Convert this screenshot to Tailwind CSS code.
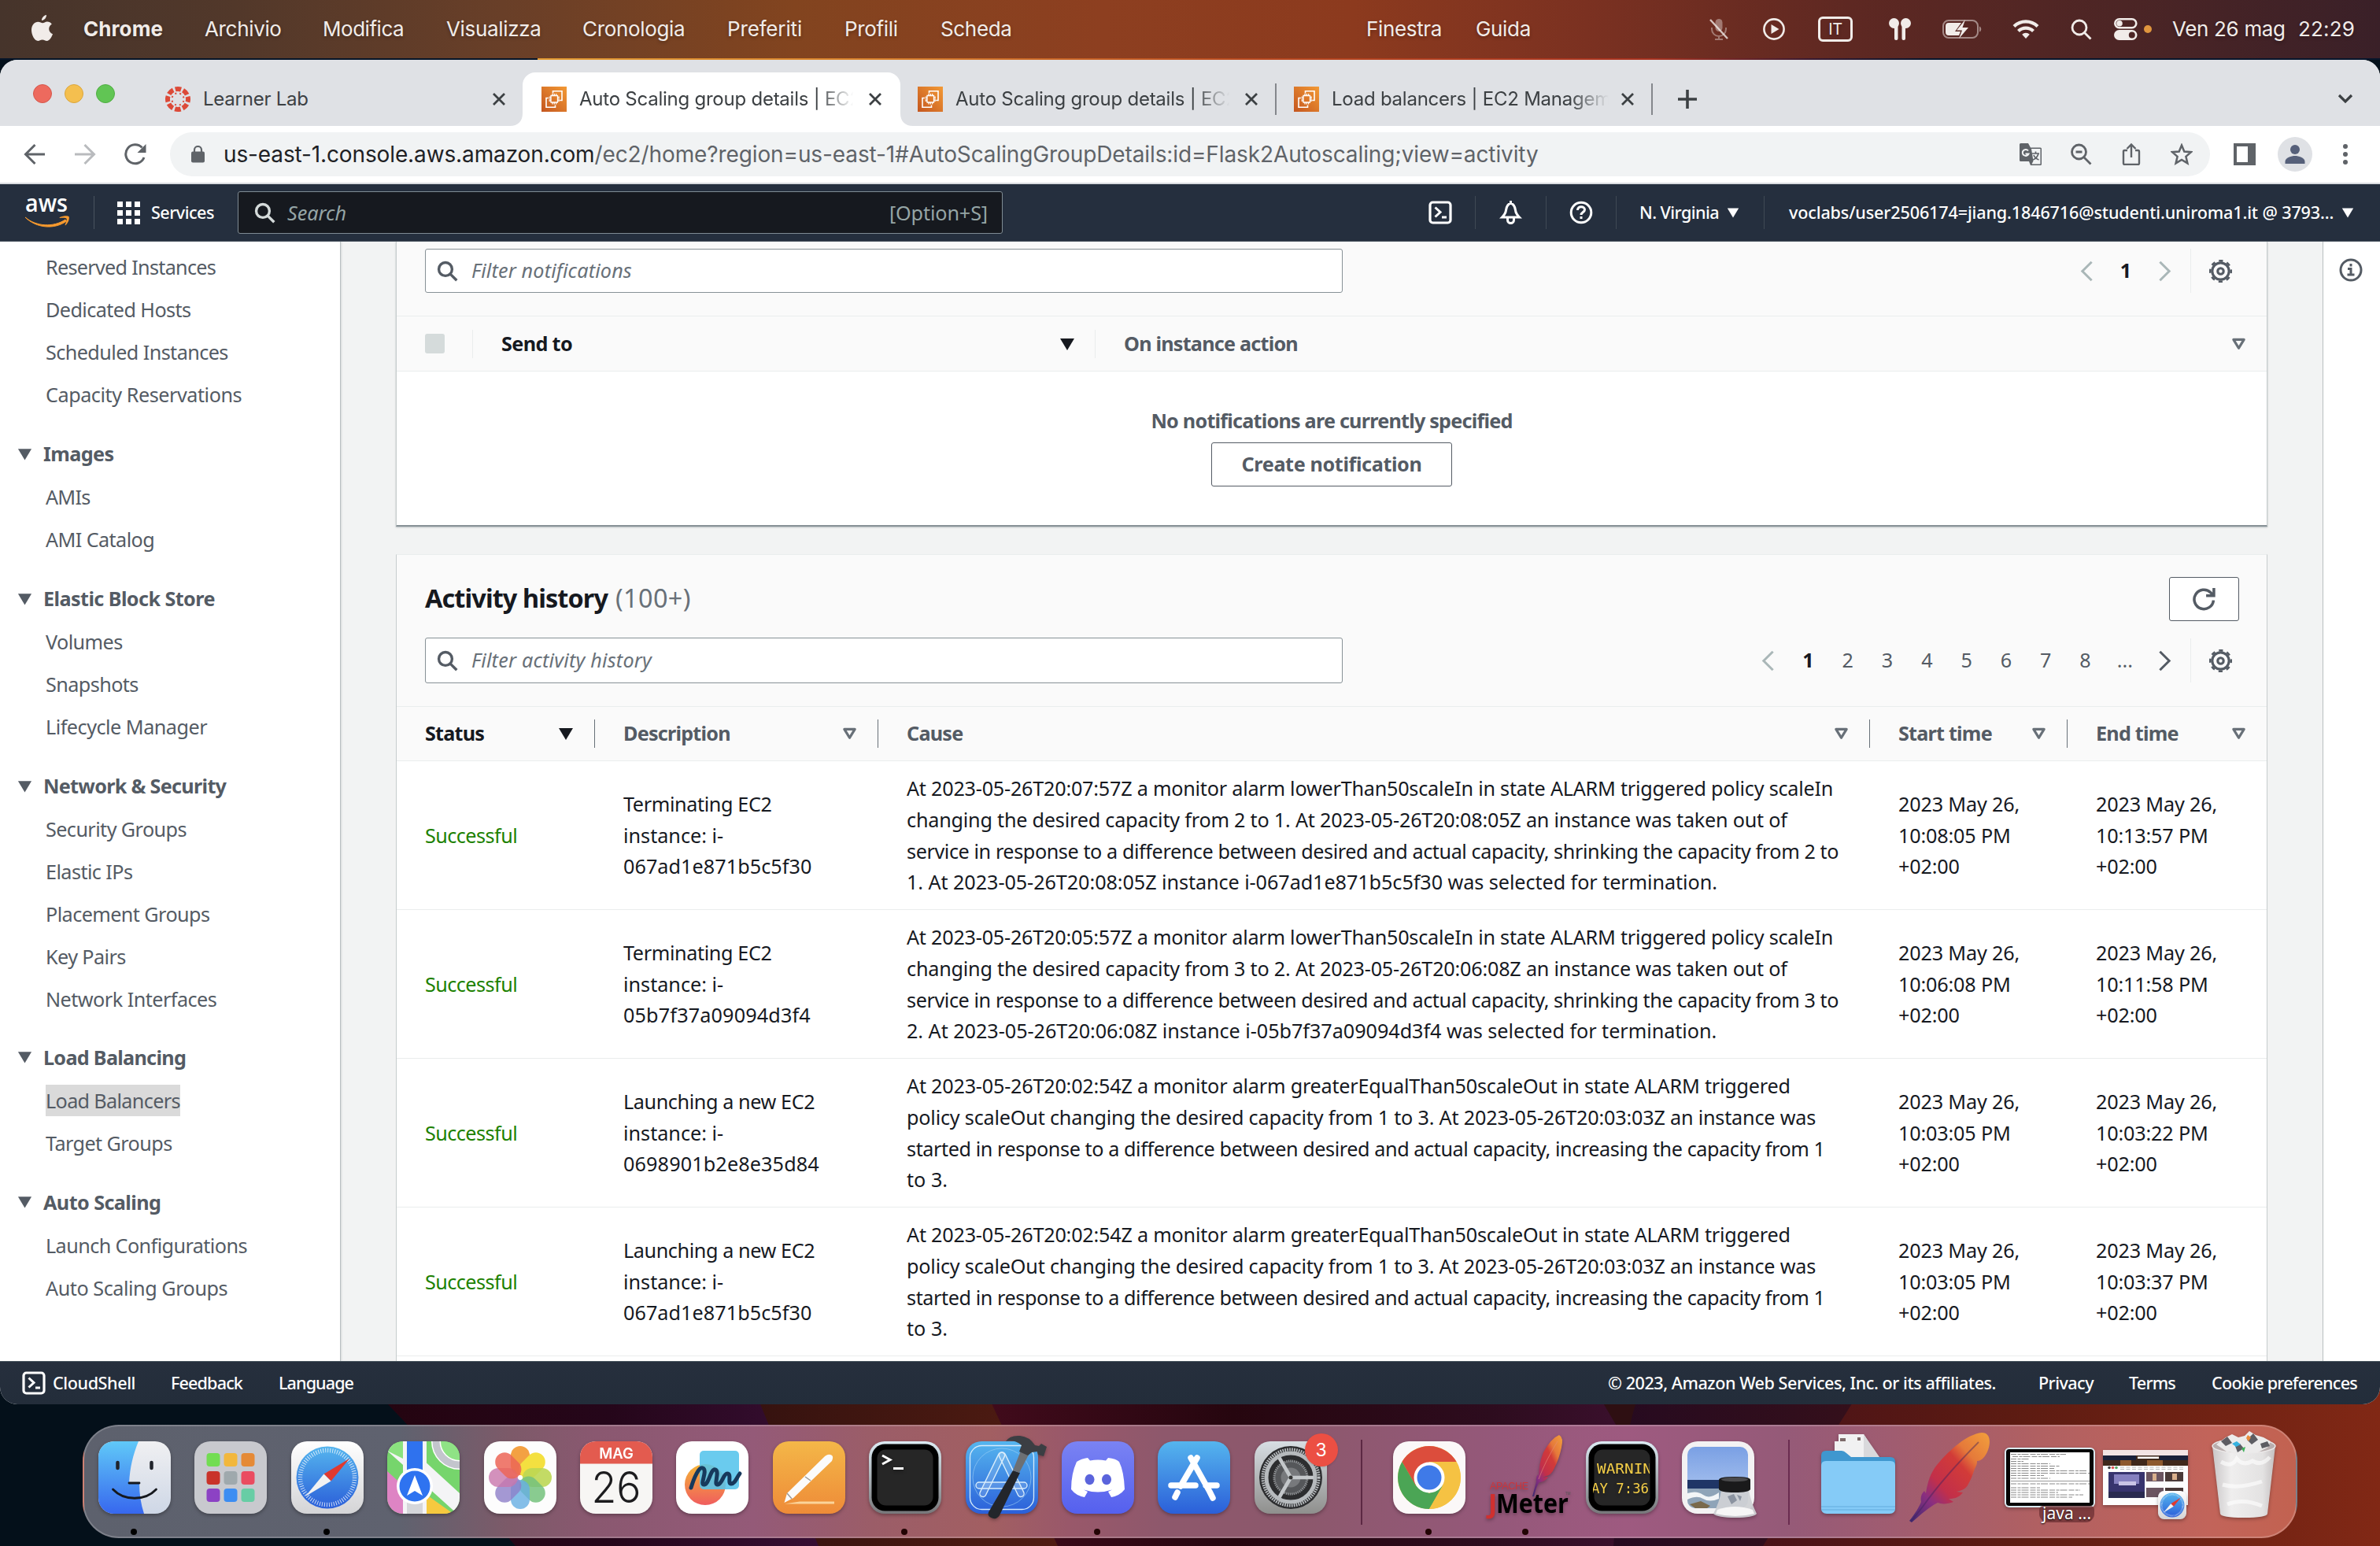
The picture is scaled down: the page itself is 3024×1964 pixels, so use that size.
<!DOCTYPE html>
<html lang="it">
<head>
<meta charset="utf-8">
<title>Auto Scaling group details | EC2 Management Console</title>
<script src="https://cdn.jsdelivr.net/npm/@tailwindcss/browser@4"></script>
</head>
<body class="relative w-[3024px] h-[1964px] overflow-hidden bg-[#04101a] font-['Noto_Sans',sans-serif]">

<svg class="absolute w-0 h-0" aria-hidden="true">
  <defs>
    <linearGradient id="ec2g" x1="0" y1="1" x2="1" y2="0"><stop offset="0" stop-color="#c4561f"/><stop offset="1" stop-color="#f39a35"/></linearGradient>
    <linearGradient id="blueV" x1="0" y1="0" x2="0" y2="1"><stop offset="0" stop-color="#55b5ee"/><stop offset="1" stop-color="#2b5fd9"/></linearGradient>
    <linearGradient id="feather" x1="1" y1="0" x2="0" y2="1"><stop offset="0" stop-color="#f2a03c"/><stop offset=".25" stop-color="#e5793a"/><stop offset=".36" stop-color="#d23b38"/><stop offset=".6" stop-color="#c22f4a"/><stop offset=".75" stop-color="#8a2f80"/><stop offset="1" stop-color="#3a2a70"/></linearGradient>
    <symbol id="ec2" viewBox="0 0 32 32"><path fill="url(#ec2g)" d="M0 0h32v32H0z"/><g fill="none" stroke="#fff" stroke-width="1.6"><path d="M14.5 8.500V5.800H26v11.700h-2.800M17.500 23.500V26.200H6V14.500h2.800"/><path d="M12 11.500h8.500v8.500H12zM14 9v2.500M16.300 9v2.500M18.600 9v2.500M14 20v2.500M16.300 20v2.500M18.600 20v2.500M9.500 13.500H12M9.500 15.800H12M9.500 18H12M20.500 13.500H23M20.500 15.800H23M20.500 18H23" stroke-width="1.300"/></g></symbol>
    <symbol id="x" viewBox="0 0 18 18"><path d="M2 2l14 14M16 2L2 16" stroke="currentColor" stroke-width="2.800" fill="none"/></symbol>
    <symbol id="mag" viewBox="0 0 16 16"><circle cx="6.500" cy="6.500" r="5" fill="none" stroke="currentColor" stroke-width="2"/><path d="M10.300 10.300l4.700 4.700" stroke="currentColor" stroke-width="2"/></symbol>
    <symbol id="down" viewBox="0 0 20 16"><path d="M1 1h18L10 16z" fill="currentColor"/></symbol>
    <symbol id="downo" viewBox="0 0 20 16"><path d="M3 2h14L10 13.500z" fill="none" stroke="currentColor" stroke-width="3.400" stroke-linejoin="round"/></symbol>
    <symbol id="prev" viewBox="0 0 18 28"><path d="M15.500 1.500L3 14l12.500 12.500" fill="none" stroke="currentColor" stroke-width="3.200"/></symbol>
    <symbol id="next" viewBox="0 0 18 28"><path d="M2.500 1.500L15 14 2.500 26.500" fill="none" stroke="currentColor" stroke-width="3.200"/></symbol>
    <symbol id="gear" viewBox="0 0 28 28"><g fill="none" stroke="currentColor"><circle cx="14" cy="14" r="10.300" stroke-width="3"/><circle cx="14" cy="14" r="3.600" stroke-width="3"/><circle cx="14" cy="14" r="12.800" stroke-width="2.600" stroke-dasharray="5 5.050" stroke-dashoffset="2.500"/></g></symbol>
    <symbol id="shell" viewBox="0 0 30 30"><rect x="2" y="2" width="26" height="26" rx="3.500" fill="none" stroke="currentColor" stroke-width="3.200"/><path d="M8.500 8.500l6.500 6-6.500 6M17 21h6" fill="none" stroke="currentColor" stroke-width="3"/></symbol>
    <linearGradient id="sfw" x1="0" y1="0" x2="0" y2="1"><stop offset="0" stop-color="#fff"/><stop offset="1" stop-color="#d4d4d6"/></linearGradient>
    <symbol id="safari" viewBox="0 0 92 92"><rect width="92" height="92" rx="20" fill="url(#sfw)"/><circle cx="46" cy="46" r="39.500" fill="url(#blueV)"/><circle cx="46" cy="46" r="34.500" fill="none" stroke="#fff" stroke-opacity=".75" stroke-width="5.500" stroke-dasharray="1 2.010"/><path d="M74 22L50.500 50.500 41.500 41.500z" fill="#e0392f"/><path d="M18 70l23.500-28.500 9 9z" fill="#f2f2f2"/></symbol>
    <symbol id="plume" viewBox="0 0 102 114"><path d="M92 0c10 0 12 10 8 22-3 8-8 14-14 14 0 2 0 5-3 10-3 9-5 14-9 21-3 5-9 7-14 8l8 1c-5 7-12 8-18 8l6 4c-8 3-15 3-20 1-12 6-20 14-33 25l-3-2c8-10 12-17 15-24-1-6 0-10 4-14l2 3c2-14 6-26 14-36C51 22 73 2 92 0z" fill="url(#feather)"/><path d="M88 12C60 40 34 70 17 94L2 113" fill="none" stroke="#40205a" stroke-opacity=".45" stroke-width="1.800"/></symbol>
    <linearGradient id="rim" x1="0" y1="0" x2="0" y2="1"><stop offset="0" stop-color="#dcebf3"/><stop offset="1" stop-color="#77777a"/></linearGradient>
    <symbol id="term" viewBox="0 0 92 92"><rect width="92" height="92" rx="20" fill="url(#rim)"/><rect x="3.500" y="3.500" width="85" height="85" rx="17" fill="#000"/><rect x="10.500" y="10.500" width="71" height="71" rx="11" fill="#262626"/></symbol>
  </defs>
</svg>

<!-- desktop wallpaper below the window -->
<svg class="absolute left-0 top-[1740px] w-[3024px] h-[224px] -z-10" viewBox="0 0 3024 224" preserveAspectRatio="none">
  <defs>
    <linearGradient id="w1"><stop offset="0" stop-color="#24040f"/><stop offset=".5" stop-color="#25061a"/><stop offset="1" stop-color="#3a1038"/></linearGradient>
    <linearGradient id="w2"><stop offset="0" stop-color="#35120f"/><stop offset="1" stop-color="#511c12"/></linearGradient>
    <linearGradient id="w3"><stop offset="0" stop-color="#420b1c"/><stop offset=".35" stop-color="#26060f"/><stop offset=".7" stop-color="#2d0c1e"/><stop offset="1" stop-color="#431236"/></linearGradient>
    <linearGradient id="w4"><stop offset="0" stop-color="#260a20"/><stop offset="1" stop-color="#36101a"/></linearGradient>
    <linearGradient id="w5"><stop offset="0" stop-color="#4a1218"/><stop offset=".4" stop-color="#5c1b12"/><stop offset="1" stop-color="#812815"/></linearGradient>
  </defs>
  <path d="M0 0h3024v224H0z" fill="#04101a"/>
  <path d="M450 0Q540 90 655 224H1100L940 0z" fill="url(#w1)"/>
  <path d="M948 0L1040 224h320L1240 0z" fill="url(#w2)"/>
  <path d="M1240 0l104 224h830L2020 0z" fill="url(#w3)"/>
  <path d="M2012 0l132 224h40L2096 0z" fill="#2e0f12"/>
  <path d="M2096 0Q2062 60 2050 224h250L2390 0z" fill="url(#w4)"/>
  <path d="M2380 0L2240 224h784V0z" fill="url(#w5)"/>
</svg>

<!-- menu bar -->
<header class="h-[74px] flex items-center bg-[linear-gradient(90deg,#46342b_0px,#52382a_300px,#693f28_640px,#82441f_1008px,#8d3f20_1400px,#8c3a1e_1720px,#7b3121_2016px,#5e2822_2350px,#4c2525_2700px,#3a2028_3024px)] text-[#f1ece9] font-['Inter',sans-serif] text-[26px] whitespace-nowrap tracking-[-0.013em] [text-shadow:0_2px_4px_rgba(0,0,0,.3)]">
  <svg class="ml-10 w-[27px] h-[33px] -mt-1 shrink-0" viewBox="0 0 27 33" fill="currentColor"><path d="M19 0c.3 3-2.600 7-6 7C12.600 4 16 .3 19 0zM20 8.500c2.300 0 4.500 1.200 5.800 3.200-5.400 3.100-4.400 10.300 1.200 12.600C25.500 28 23 33 19.500 33c-2.300 0-3-1.400-5.700-1.400-2.700 0-3.500 1.400-5.600 1.400C4 33 0 25.500 0 19.300 0 12.500 4.200 8.700 8.300 8.700c2.500 0 4.300 1.600 5.900 1.600 1.500 0 3.400-1.800 5.800-1.800z"/></svg>
  <b class="ml-[39px] -mt-px w-[154px] font-bold tracking-[0.003em]">Chrome</b>
  <span class="-mt-px w-[150px]">Archivio</span>
  <span class="-mt-px w-[157px] tracking-[-0.018em]">Modifica</span>
  <span class="-mt-px w-[173px]">Visualizza</span>
  <span class="-mt-px w-[184px]">Cronologia</span>
  <span class="-mt-px w-[149px] tracking-[-0.006em]">Preferiti</span>
  <span class="-mt-px w-[122px]">Profili</span>
  <span class="-mt-px w-[541px]">Scheda</span>
  <span class="-mt-px w-[139px]">Finestra</span>
  <span class="-mt-px w-[295px]">Guida</span>
  <svg class="w-[28px] h-[28px] shrink-0" viewBox="0 0 28 28"><g opacity=".4" fill="currentColor"><rect x="9.500" y="1" width="9" height="16" rx="4.500"/><path d="M5 12v2a9 9 0 0018 0v-2M14 23v4M9 27h10" fill="none" stroke="currentColor" stroke-width="2"/></g><path d="M3 2l22 24" stroke="currentColor" stroke-opacity=".8" stroke-width="2.400"/></svg>
  <svg class="ml-[42px] w-[28px] h-[28px] shrink-0" viewBox="0 0 28 28"><circle cx="14" cy="14" r="12.600" fill="none" stroke="currentColor" stroke-width="2.600"/><path d="M10.500 8l10 6-10 6z" fill="currentColor"/></svg>
  <span class="ml-[42px] w-[44px] h-[32px] border-[3px] border-current rounded-[6px] text-[20px] leading-[26px] text-center shrink-0">IT</span>
  <svg class="ml-[45px] w-[30px] h-[28px] shrink-0" viewBox="0 0 30 28" fill="currentColor"><circle cx="7.500" cy="6.500" r="6.500"/><circle cx="22.500" cy="6.500" r="6.500"/><rect x="8" y="8" width="4.500" height="20" rx="2"/><rect x="17.500" y="8" width="4.500" height="20" rx="2"/></svg>
  <svg class="ml-[39px] w-[50px] h-[26px] shrink-0" viewBox="0 0 50 26"><rect x="1" y="2" width="44" height="22" rx="7" fill="none" stroke="currentColor" stroke-opacity=".5" stroke-width="2"/><path d="M47 9.500c3 1 3 6 0 7z" fill="currentColor" opacity=".5"/><path d="M8 5h16l-8 11h7l-2 5H8a4 4 0 01-4-4V9a4 4 0 014-4z" fill="currentColor"/><path d="M29 1L18 14.500h7L21 25l12-14h-7.500z" fill="currentColor"/></svg>
  <svg class="ml-[39px] w-[34px] h-[26px] shrink-0" viewBox="0 0 34 26" fill="none" stroke="currentColor" stroke-width="4.200"><path d="M2 9.500a21.500 21.500 0 0130 0M7.500 15.500a13.500 13.500 0 0119 0"/><path d="M17 25l-4.800-5.200a6.800 6.800 0 019.600 0z" fill="currentColor" stroke="none"/></svg>
  <svg class="ml-[40px] w-[27px] h-[27px] shrink-0" viewBox="0 0 27 27" fill="none" stroke="currentColor" stroke-width="2.800"><circle cx="11" cy="11" r="9"/><path d="M17.500 17.500l8 8"/></svg>
  <svg class="ml-[28px] w-[30px] h-[28px] shrink-0" viewBox="0 0 30 28"><rect x="1.300" y="1.300" width="27" height="11" rx="5.500" fill="none" stroke="currentColor" stroke-width="2.600"/><circle cx="7" cy="6.800" r="3.800" fill="currentColor"/><rect x="0" y="15" width="29.500" height="13" rx="6.500" fill="currentColor"/><circle cx="22.800" cy="21.500" r="4" fill="#4c2525"/></svg>
  <i class="ml-[8px] w-[10px] h-[10px] rounded-full bg-[#e0963e] shrink-0"></i>
  <span class="ml-[26px] -mt-[2px] w-[160px]">Ven 26 mag</span><span class="-mt-[2px] tracking-[0.006em]">22:29</span>
</header>
<div class="h-[2px] bg-[linear-gradient(90deg,#061528_683px,#e39a31_683px,#d9822c_1100px,#b8481f_1600px,#a8321f_2100px,#3a1a30_2300px,#08162c_2450px)]"></div>

<!-- browser window -->
<main class="h-[1708px] bg-white rounded-[22px] overflow-hidden flex flex-col">
  <!-- tab strip -->
  <div class="h-[84px] bg-[#dfe1e5] flex items-end font-['Inter',sans-serif] text-[24px] text-[#3c4043] whitespace-nowrap tracking-[-0.01em] shrink-0">
    <div class="flex h-[68px] items-center pl-[42px] w-[664px]">
      <div class="flex gap-4 -mt-[14px]"><i class="size-6 rounded-full bg-[#ed6a5e] border border-[#d5574c]"></i><i class="size-6 rounded-full bg-[#f4bf4f] border border-[#dba63c]"></i><i class="size-6 rounded-full bg-[#61c554] border border-[#4fae42]"></i></div>
      <svg class="ml-[64px] size-8 shrink-0" viewBox="0 0 32 32"><circle cx="16" cy="16" r="13" fill="none" stroke="#dc4a38" stroke-width="6" stroke-dasharray="7.500 2.710" stroke-dashoffset="3.750"/><circle cx="16" cy="16" r="7.600" fill="none" stroke="#dc4a38" stroke-width="2" stroke-dasharray="2 3.970" stroke-dashoffset="-2"/></svg>
      <span class="ml-4 w-[367px]">Learner Lab</span>
      <svg class="size-[18px] shrink-0"><use href="#x"/></svg>
    </div>
    <div class="relative flex h-[68px] w-[480px] items-center rounded-t-[16px] bg-white pl-6">
      <svg class="absolute -left-4 bottom-0 size-4" viewBox="0 0 16 16"><path d="M16 0v16H0C10 16 16 10 16 0z" fill="#fff"/></svg>
      <svg class="absolute -right-4 bottom-0 size-4" viewBox="0 0 16 16"><path d="M0 0v16h16C6 16 0 10 0 0z" fill="#fff"/></svg>
      <svg class="size-8 shrink-0"><use href="#ec2"/></svg>
      <span class="ml-4 w-[352px] mr-[15px] overflow-hidden [mask-image:linear-gradient(90deg,#000_86%,transparent_99%)] shrink-0">Auto Scaling group details | EC2</span>
      <svg class="size-[18px] shrink-0"><use href="#x"/></svg>
    </div>
    <div class="flex h-[68px] w-[478px] items-center pl-[22px]">
      <svg class="size-8 shrink-0"><use href="#ec2"/></svg>
      <span class="ml-4 w-[352px] mr-[15px] overflow-hidden [mask-image:linear-gradient(90deg,#000_86%,transparent_99%)] shrink-0">Auto Scaling group details | EC2</span>
      <svg class="size-[18px] shrink-0"><use href="#x"/></svg>
      <i class="ml-[21px] w-[2px] h-10 bg-[#84878c] shrink-0"></i>
    </div>
    <div class="flex h-[68px] w-[478px] items-center pl-[22px]">
      <svg class="size-8 shrink-0"><use href="#ec2"/></svg>
      <span class="ml-4 w-[352px] mr-[15px] overflow-hidden [mask-image:linear-gradient(90deg,#000_86%,transparent)] shrink-0">Load balancers | EC2 Management</span>
      <svg class="size-[18px] shrink-0"><use href="#x"/></svg>
      <i class="ml-[21px] w-[2px] h-10 bg-[#84878c] shrink-0"></i>
    </div>
    <svg class="ml-[32px] mb-[22px] size-6" viewBox="0 0 24 24"><path d="M12 0v24M0 12h24" stroke="#3c4043" stroke-width="3.600"/></svg>
    <svg class="ml-auto mr-[34px] mb-[28px] w-[20px] h-[13px]" viewBox="0 0 20 13"><path d="M2 2l8 8 8-8" fill="none" stroke="#3c4043" stroke-width="3.200"/></svg>
  </div>
  <!-- toolbar -->
  <div class="h-[74px] bg-white border-b-2 border-[#dadce0] flex items-center pl-[30px] shrink-0 text-[#5f6368]">
    <svg class="w-7 h-7" viewBox="0 0 28 28" fill="none" stroke="currentColor" stroke-width="3"><path d="M27 14H3M14.500 2L2.500 14l12 12"/></svg>
    <svg class="ml-9 w-7 h-7 text-[#b9bbbe]" viewBox="0 0 28 28" fill="none" stroke="currentColor" stroke-width="3"><path d="M1 14h24M13.500 2l12 12-12 12"/></svg>
    <svg class="ml-9 w-7 h-7" viewBox="0 0 28 28" fill="none" stroke="currentColor" stroke-width="3"><path d="M25 18a12 12 0 11-2.500-12.500"/><path d="M27.500 1v11h-11z" fill="currentColor" stroke="none"/></svg>
    <div class="ml-[30px] w-[2592px] h-14 rounded-full bg-[#f1f3f4] flex items-center pl-[27px] font-['Inter',sans-serif] text-[28px] whitespace-nowrap tracking-[-0.0045em]">
      <svg class="w-[17px] h-[22px]" viewBox="0 0 17 22"><rect y="7.500" width="17" height="14" rx="2" fill="currentColor"/><path d="M4 8V5.500a4.500 4.500 0 019 0V8" fill="none" stroke="currentColor" stroke-width="2.200"/></svg>
      <span class="ml-[24px] text-[#202124]">us-east-1.console.aws.amazon.com</span><span class="tracking-[-0.004em]">/ec2/home?region=us-east-1#AutoScalingGroupDetails:id=Flask2Autoscaling;view=activity</span>
      <div class="ml-auto mr-[22px] flex gap-9">
        <svg class="size-7" viewBox="0 0 28 28"><path d="M1.500 0h9.500l3 5.500h12.500q1.500 0 1.500 1.500v19.500q0 1.500-1.500 1.500H14l-2-5H1.500Q0 23 0 21.500v-20Q0 0 1.500 0z" fill="currentColor"/><path d="M15 7h11.500v19.500H15.500l2-4z" fill="#f1f3f4"/><path d="M11 9.500a4 4 0 10.500 4H7.500" fill="none" stroke="#f1f3f4" stroke-width="2"/><path d="M16 13h9M20.500 10.500V13M24 13c-1 4-4 7-7 8M18 15c1 3 4 5 6.500 6" stroke="currentColor" stroke-width="1.700" fill="none"/></svg>
        <svg class="size-7" viewBox="0 0 28 28" fill="none" stroke="currentColor" stroke-width="2.800"><circle cx="11.500" cy="11" r="9"/><path d="M18 18l8.500 8.500M7.500 11h8"/></svg>
        <svg class="size-7" viewBox="0 0 28 28" fill="none" stroke="currentColor" stroke-width="2.400"><path d="M9 9H5.500Q4 9 4 10.500v15Q4 27 5.500 27h17q1.500 0 1.500-1.500v-15Q24 9 22.500 9H19M14 18V2M8.500 7L14 1.500 19.500 7"/></svg>
        <svg class="size-7" viewBox="0 0 28 28" fill="none" stroke="currentColor" stroke-width="2.500"><path d="M14 2.500l3.300 8 8.700.7-6.600 5.700 2 8.500L14 20.900l-7.400 4.500 2-8.500L2 11.200l8.700-.7z"/></svg>
      </div>
    </div>
    <svg class="ml-[30px] size-7" viewBox="0 0 28 28"><path d="M0 0h28v28H0zM4 4v20h14V4z" fill="currentColor" fill-rule="evenodd"/></svg>
    <svg class="ml-[28px] size-11" viewBox="0 0 44 44"><circle cx="22" cy="22" r="22" fill="#dfe1e5"/><circle cx="22" cy="16" r="6" fill="#56607a"/><path d="M9.500 34v-3c0-4.500 8-7 12.500-7s12.500 2.500 12.500 7v3z" fill="#56607a"/></svg>
    <svg class="ml-[39px] w-[6px] h-[26px]" viewBox="0 0 6 26" fill="currentColor"><circle cx="3" cy="3" r="3"/><circle cx="3" cy="13" r="3"/><circle cx="3" cy="23" r="3"/></svg>
  </div>
  <!-- AWS navigation -->
  <nav class="h-[73px] bg-[#252f3e] border-b border-[#4a545f] flex items-center text-white text-[21.600px] font-medium whitespace-nowrap shrink-0">
    <svg class="ml-8 w-[57px] h-[37px] shrink-0 overflow-visible" viewBox="0 0 57 37"><text x="0" y="17" font-family="Open Sans" font-weight="600" font-size="31" textLength="54" lengthAdjust="spacingAndGlyphs" fill="#fff">aws</text><path d="M0 24c14 12 36 13 51 3l1.500 2C37 40 14 38 0 24z" fill="#f79a2e" stroke="#f79a2e"/><path d="M44 24c4-2 10-2.500 11.500-1 1.200 2-.5 8-4 11-1 .5-1 0-.7-.8 1.500-3.500 2.500-6.500 1.700-7.500-1-1-4.500-1-8-.6-1 0-1.300-.6-.5-1.100z" fill="#f79a2e"/></svg>
    <i class="ml-[30px] w-px h-[42px] bg-[#4a545f]"></i>
    <svg class="ml-[29px] w-[29px] h-[29px]" viewBox="0 0 29 29" fill="#fff"><path d="M0 0h7v7H0zM11 0h7v7h-7zM22 0h7v7h-7zM0 11h7v7H0zM11 11h7v7h-7zM22 11h7v7h-7zM0 22h7v7H0zM11 22h7v7h-7zM22 22h7v7h-7z"/></svg>
    <span class="ml-[14px] w-[110px] tracking-[-0.024em]">Services</span>
    <div class="w-[972px] h-[54px] rounded-[3px] border border-[#7f8b93] bg-[#16191f] flex items-center text-[25.200px] font-normal text-[#95a5a6]">
      <svg class="ml-[20px] size-[27px] text-[#d5dbdb]"><use href="#mag"/></svg>
      <i class="ml-[15px] mt-px">Search</i>
      <span class="ml-auto mr-[18px] mt-px tracking-[-0.005em]">[Option+S]</span>
    </div>
    <svg class="ml-[541px] size-[30px]"><use href="#shell"/></svg>
    <i class="ml-[29px] w-px h-[42px] bg-[#3f4954]"></i>
    <svg class="ml-[30px] w-[29px] h-[30px]" viewBox="0 0 29 30" fill="none" stroke="#fff" stroke-width="3"><path d="M14.500 3c-4 1.500-5.500 5-6 9-.4 4-2 6-5 9h22c-3-3-4.600-5-5-9-.5-4-2-7.500-6-9zM14.500 0v4M10.500 22v2.500a4 4 0 008 0V22"/></svg>
    <i class="ml-[30px] w-px h-[42px] bg-[#3f4954]"></i>
    <svg class="ml-[29px] size-[30px]" viewBox="0 0 30 30" fill="none" stroke="#fff" stroke-width="3"><circle cx="15" cy="15" r="12.800"/><path d="M10.500 12c0-6 9-5.500 9-.5 0 3-4.500 3-4.500 6.500M15 20v3"/></svg>
    <i class="ml-[29px] w-px h-[42px] bg-[#3f4954]"></i>
    <span class="ml-[29px] w-[111px] mt-px tracking-[-0.026em]">N. Virginia</span>
    <svg class="w-[16px] h-[14px]"><use href="#down"/></svg>
    <i class="ml-[31px] w-px h-[42px] bg-[#3f4954]"></i>
    <span class="ml-[31px] w-[702px] mt-px tracking-[-0.007em]">voclabs/user2506174=jiang.1846716@studenti.uniroma1.it @ 3793...</span>
    <svg class="w-[16px] h-[14px]"><use href="#down"/></svg>
  </nav>

  <!-- console body -->
  <div class="h-[1422px] flex bg-[#f2f3f3] overflow-hidden text-[25.200px] text-[#16191f] shrink-0 whitespace-nowrap">
    <aside class="w-[433px] bg-white border-r border-[#b9bfc1] shadow-[1px_0_2px_rgba(0,28,36,.12)] text-[#545b64] shrink-0 pt-[6px] tracking-[-0.023em]">
      <ul class="pl-[58px] [&>li]:h-[54px] [&>li]:flex [&>li]:items-center">
        <li class="tracking-[-0.028em]">Reserved Instances</li><li>Dedicated Hosts</li><li>Scheduled Instances</li><li class="tracking-[-0.018em]">Capacity Reservations</li>
      </ul>
      <h3 class="mt-5 h-14 flex items-center pl-[22px] font-bold"><svg class="w-[19px] h-[16px] mr-[14px]"><use href="#down"/></svg>Images</h3>
      <ul class="pl-[58px] [&>li]:h-[54px] [&>li]:flex [&>li]:items-center"><li class="tracking-[-0.03em]">AMIs</li><li>AMI Catalog</li></ul>
      <h3 class="mt-5 h-14 flex items-center pl-[22px] font-bold"><svg class="w-[19px] h-[16px] mr-[14px]"><use href="#down"/></svg>Elastic Block Store</h3>
      <ul class="pl-[58px] [&>li]:h-[54px] [&>li]:flex [&>li]:items-center"><li>Volumes</li><li>Snapshots</li><li class="tracking-[-0.02em]">Lifecycle Manager</li></ul>
      <h3 class="mt-5 h-14 flex items-center pl-[22px] font-bold tracking-[-0.028em]"><svg class="w-[19px] h-[16px] mr-[14px]"><use href="#down"/></svg>Network &amp; Security</h3>
      <ul class="pl-[58px] [&>li]:h-[53.900px] [&>li]:flex [&>li]:items-center"><li>Security Groups</li><li>Elastic IPs</li><li>Placement Groups</li><li>Key Pairs</li><li class="tracking-[-0.021em]">Network Interfaces</li></ul>
      <h3 class="mt-[19px] h-14 flex items-center pl-[22px] font-bold tracking-[-0.028em]"><svg class="w-[19px] h-[16px] mr-[14px]"><use href="#down"/></svg>Load Balancing</h3>
      <ul class="pl-[58px] [&>li]:h-[54px] [&>li]:flex [&>li]:items-center"><li><span class="bg-[#dadada] h-10 leading-10 tracking-[-0.026em]">Load Balancers</span></li><li>Target Groups</li></ul>
      <h3 class="mt-5 h-14 flex items-center pl-[22px] font-bold"><svg class="w-[19px] h-[16px] mr-[14px]"><use href="#down"/></svg>Auto Scaling</h3>
      <ul class="pl-[58px] [&>li]:h-[54px] [&>li]:flex [&>li]:items-center"><li>Launch Configurations</li><li class="tracking-[-0.018em]">Auto Scaling Groups</li></ul>
    </aside>

    <div class="ml-[70px] w-[2378px] flex flex-col gap-[35px] shrink-0">
      <!-- notifications card -->
      <section class="h-[362px] bg-white border-x border-b-2 border-x-[#c6cccd] border-b-[#879196] shadow-[0_1px_2px_rgba(0,28,36,.25)] shrink-0">
        <div class="h-[95px] bg-[#fafafa] border-b border-[#eaeded] pt-[9px] pl-[36px] pr-[35px] flex items-start">
          <div class="w-[1166px] h-[56px] bg-white border border-[#879196] rounded-[3px] flex items-center italic text-[#687078]"><svg class="ml-[14px] size-[27px] text-[#545b64]"><use href="#mag"/></svg><span class="ml-[17px] tracking-[0.006em]">Filter notifications</span></div>
          <div class="ml-auto flex items-center h-[56px] text-[#545b64]">
            <svg class="w-[17px] h-[27px] text-[#aab7b8]"><use href="#prev"/></svg>
            <b class="w-[82px] text-center text-[#16191f]">1</b>
            <svg class="w-[17px] h-[27px] text-[#aab7b8]"><use href="#next"/></svg>
            <i class="ml-[24px] w-px h-[56px] bg-[#eaeded]"></i>
            <svg class="ml-[23px] mr-[9px] size-[29px]"><use href="#gear"/></svg>
          </div>
        </div>
        <div class="h-[70px] bg-[#fafafa] border-b border-[#eaeded] flex items-center font-bold">
          <i class="ml-[36px] size-[25px] rounded-[3px] bg-[#d5dbdb]"></i>
          <i class="ml-[35px] w-px h-9 bg-[#eaeded]"></i>
          <span class="ml-[36px] w-[709px] tracking-[-0.025em]">Send to</span>
          <svg class="w-[20px] h-[16px]"><use href="#down"/></svg>
          <i class="ml-[25px] w-px h-9 bg-[#eaeded]"></i>
          <span class="ml-[36px] text-[#545b64] tracking-[-0.031em]">On instance action</span>
          <svg class="ml-auto mr-[26px] w-[19px] h-[16px] text-[#687078]"><use href="#downo"/></svg>
        </div>
        <div class="flex flex-col items-center pt-[42px] font-bold text-[#545b64]">
          <span class="leading-[40px] tracking-[-0.031em]">No notifications are currently specified</span>
          <div class="mt-[8px] w-[306px] h-[56px] border border-[#545b64] rounded-[3px] flex items-center justify-center tracking-[-0.015em]">Create notification</div>
        </div>
      </section>

      <!-- activity history card -->
      <section class="h-[1100px] bg-white border-x border-t border-x-[#c6cccd] border-t-[#eaeded] shrink-0">
        <div class="h-[193px] bg-[#fafafa] border-b border-[#eaeded] pl-[36px] pr-[35px] pt-[28px]">
          <div class="flex h-[56px] items-center text-[32.400px]">
            <b class="mr-[10px] -mt-1 tracking-[-0.0276em]">Activity history</b><span class="-mt-1 text-[#687078] tracking-[0.012em]">(100+)</span>
            <div class="ml-auto w-[89px] h-[56px] border border-[#545b64] rounded-[3px] bg-white flex items-center justify-center text-[#545b64]"><svg class="size-[29px]" viewBox="0 0 28 28" fill="none" stroke="currentColor" stroke-width="3.400"><path d="M25.500 15A11.800 11.800 0 1122 5.500l3 3"/><path d="M26 0v9.500H16.500"/></svg></div>
          </div>
          <div class="mt-[21px] flex items-center">
            <div class="w-[1166px] h-[58px] bg-white border border-[#879196] rounded-[3px] flex items-center italic text-[#687078]"><svg class="ml-[14px] size-[27px] text-[#545b64]"><use href="#mag"/></svg><span class="ml-[17px] tracking-[0.008em]">Filter activity history</span></div>
            <div class="ml-auto flex items-center h-[56px] text-[#545b64] [&>span]:w-[50.300px] [&>span]:text-center">
              <svg class="w-[17px] h-[27px] text-[#aab7b8] mr-[17px]"><use href="#prev"/></svg>
              <span class="font-bold text-[#16191f]">1</span><span>2</span><span>3</span><span>4</span><span>5</span><span>6</span><span>7</span><span>8</span><span>...</span>
              <svg class="ml-[17px] w-[17px] h-[27px]"><use href="#next"/></svg>
              <i class="ml-[24px] w-px h-[56px] bg-[#eaeded]"></i>
              <svg class="ml-[23px] mr-[9px] size-[29px]"><use href="#gear"/></svg>
            </div>
          </div>
        </div>
        <div class="grid grid-cols-[252px_360px_1260px_251px_253px] h-[69px] bg-[#fafafa] border-b border-[#eaeded] items-center font-bold text-[#545b64] tracking-[-0.031em] [&>div]:flex [&>div]:items-center [&>div]:justify-between [&>div]:h-9 [&>div]:pl-[36px] [&>div]:pr-[26px]">
          <div class="border-r border-[#687078] text-[#16191f]">Status<svg class="w-[20px] h-[16px]"><use href="#down"/></svg></div>
          <div class="border-r border-[#687078]">Description<svg class="w-[19px] h-[16px] text-[#687078]"><use href="#downo"/></svg></div>
          <div class="border-r border-[#687078]">Cause<svg class="w-[19px] h-[16px] text-[#687078]"><use href="#downo"/></svg></div>
          <div class="border-r border-[#687078]">Start time<svg class="w-[19px] h-[16px] text-[#687078]"><use href="#downo"/></svg></div>
          <div>End time<svg class="w-[19px] h-[16px] text-[#687078]"><use href="#downo"/></svg></div>
        </div>
        <div class="[&>div]:grid [&>div]:grid-cols-[252px_360px_1260px_251px_253px] [&>div]:h-[189px] [&>div]:pt-px [&>div]:items-center [&>div]:border-b [&>div]:border-[#eaeded] [&>div>p]:pl-[36px] leading-[39.600px]">
          <div>
            <p class="text-[#1d8102] tracking-[-0.022em]">Successful</p>
            <p><span class="tracking-[-0.015em]">Terminating EC2</span><br>instance: i-<br><span class="tracking-[0.002em]">067ad1e871b5c5f30</span></p>
            <p><span class="tracking-[-0.009em]">At 2023-05-26T20:07:57Z a monitor alarm lowerThan50scaleIn in state ALARM triggered policy scaleIn</span><br><span class="tracking-[-0.0085em]">changing the desired capacity from 2 to 1. At 2023-05-26T20:08:05Z an instance was taken out of</span><br><span class="tracking-[-0.0164em]">service in response to a difference between desired and actual capacity, shrinking the capacity from 2 to</span><br><span class="tracking-[-0.0027em]">1. At 2023-05-26T20:08:05Z instance i-067ad1e871b5c5f30 was selected for termination.</span></p>
            <p class="tracking-[-0.007em]">2023 May 26,<br>10:08:05 PM<br>+02:00</p>
            <p class="tracking-[-0.007em]">2023 May 26,<br>10:13:57 PM<br>+02:00</p>
          </div>
          <div>
            <p class="text-[#1d8102] tracking-[-0.022em]">Successful</p>
            <p><span class="tracking-[-0.015em]">Terminating EC2</span><br>instance: i-<br><span class="tracking-[0.006em]">05b7f37a09094d3f4</span></p>
            <p><span class="tracking-[-0.009em]">At 2023-05-26T20:05:57Z a monitor alarm lowerThan50scaleIn in state ALARM triggered policy scaleIn</span><br><span class="tracking-[-0.0085em]">changing the desired capacity from 3 to 2. At 2023-05-26T20:06:08Z an instance was taken out of</span><br><span class="tracking-[-0.0164em]">service in response to a difference between desired and actual capacity, shrinking the capacity from 3 to</span><br><span class="tracking-[-0.0015em]">2. At 2023-05-26T20:06:08Z instance i-05b7f37a09094d3f4 was selected for termination.</span></p>
            <p class="tracking-[-0.007em]">2023 May 26,<br>10:06:08 PM<br>+02:00</p>
            <p class="tracking-[-0.007em]">2023 May 26,<br>10:11:58 PM<br>+02:00</p>
          </div>
          <div>
            <p class="text-[#1d8102] tracking-[-0.022em]">Successful</p>
            <p><span class="tracking-[-0.016em]">Launching a new EC2</span><br>instance: i-<br><span class="tracking-[0.005em]">0698901b2e8e35d84</span></p>
            <p><span class="tracking-[-0.0085em]">At 2023-05-26T20:02:54Z a monitor alarm greaterEqualThan50scaleOut in state ALARM triggered</span><br><span class="tracking-[-0.0078em]">policy scaleOut changing the desired capacity from 1 to 3. At 2023-05-26T20:03:03Z an instance was</span><br><span class="tracking-[-0.0166em]">started in response to a difference between desired and actual capacity, increasing the capacity from 1</span><br>to 3.</p>
            <p class="tracking-[-0.007em]">2023 May 26,<br>10:03:05 PM<br>+02:00</p>
            <p class="tracking-[-0.007em]">2023 May 26,<br>10:03:22 PM<br>+02:00</p>
          </div>
          <div>
            <p class="text-[#1d8102] tracking-[-0.022em]">Successful</p>
            <p><span class="tracking-[-0.016em]">Launching a new EC2</span><br>instance: i-<br><span class="tracking-[0.002em]">067ad1e871b5c5f30</span></p>
            <p><span class="tracking-[-0.0085em]">At 2023-05-26T20:02:54Z a monitor alarm greaterEqualThan50scaleOut in state ALARM triggered</span><br><span class="tracking-[-0.0078em]">policy scaleOut changing the desired capacity from 1 to 3. At 2023-05-26T20:03:03Z an instance was</span><br><span class="tracking-[-0.0166em]">started in response to a difference between desired and actual capacity, increasing the capacity from 1</span><br>to 3.</p>
            <p class="tracking-[-0.007em]">2023 May 26,<br>10:03:05 PM<br>+02:00</p>
            <p class="tracking-[-0.007em]">2023 May 26,<br>10:03:37 PM<br>+02:00</p>
          </div>
        </div>
      </section>
    </div>
    <aside class="ml-auto w-[73px] bg-white border-l border-[#b9bfc1] pl-[20px] pt-[21px] shrink-0">
      <svg class="size-[30px]" viewBox="0 0 30 30" fill="none" stroke="#545b64" stroke-width="3"><circle cx="15" cy="15" r="13"/><path d="M15 7v3.500M11 13.500h4v7M10.500 21h9"/></svg>
    </aside>
  </div>
  <!-- console footer -->
  <footer class="h-[55px] bg-[linear-gradient(#262f3d,#232d3a)] border-t border-[#47545e] flex items-center text-white text-[21.600px] font-medium whitespace-nowrap">
    <svg class="ml-[28px] size-[30px]"><use href="#shell"/></svg>
    <span class="ml-[9px] w-[150px] tracking-[-0.019em]">CloudShell</span>
    <span class="w-[137px] tracking-[-0.04em]">Feedback</span>
    <span class="tracking-[-0.043em]">Language</span>
    <span class="ml-auto w-[547px] tracking-[-0.0214em]">© 2023, Amazon Web Services, Inc. or its affiliates.</span>
    <span class="w-[115px] tracking-[-0.0256em]">Privacy</span>
    <span class="w-[105px] tracking-[-0.038em]">Terms</span>
    <span class="w-[214px] tracking-[-0.0353em]">Cookie preferences</span>
  </footer>
</main>

<!-- dock -->
<div class="mt-[26px] ml-[105px] w-[2814px] h-[144px] rounded-[46px] border-2 border-white/20 bg-[linear-gradient(90deg,#5d616d_0px,#5f626f_400px,#7d5a69_540px,#8a5870_650px,#945a78_850px,#9b5d68_1000px,#a25f62_1150px,#99586a_1250px,#8e586c_1370px,#8c586c_1540px,#95587a_1800px,#9e5a80_1960px,#955a78_2160px,#a05c70_2300px,#b06062_2480px,#c2645a_2700px,#c26250_2814px)] pt-[19px] pl-[18px] flex items-start [&>div]:relative [&>div]:size-[92px] [&>div]:shrink-0 [&>div]:mr-[30.400px] [&>div>svg]:size-full [&>div>svg]:overflow-visible [&>div>svg]:drop-shadow-[0_2px_2px_rgba(0,0,0,.3)]">
  <div><svg viewBox="0 0 92 92"><defs><linearGradient id="fb" x1="0" y1="0" x2="0" y2="1"><stop offset="0" stop-color="#60c9f8"/><stop offset="1" stop-color="#3767ee"/></linearGradient><linearGradient id="fw" x1="0" y1="0" x2="0" y2="1"><stop offset="0" stop-color="#f0f0f2"/><stop offset="1" stop-color="#ced7e6"/></linearGradient></defs><rect width="92" height="92" rx="20" fill="url(#fw)"/><path d="M20 0h31C44 17 40 33 39 53h13c0 14 2 27 6 39H20A20 20 0 010 72V20A20 20 0 0120 0z" fill="url(#fb)"/><path d="M24.500 27v7M67.500 27v7" stroke="#20242c" stroke-width="4.500" stroke-linecap="round"/><path d="M18.500 61c14 15 41 15 55 0M39 53h13" fill="none" stroke="#15181d" stroke-width="2.800" stroke-linecap="round"/></svg><i class="absolute left-[41px] top-[111px] size-2 rounded-full bg-black"></i></div>
  <div><svg viewBox="0 0 92 92"><rect width="92" height="92" rx="20" fill="#c8c9ce"/><rect x="15.500" y="15" width="17" height="17" rx="4" fill="#72dd52"/><rect x="37.500" y="15" width="17" height="17" rx="4" fill="#f2b73c"/><rect x="59.500" y="15" width="17" height="17" rx="4" fill="#e58a36"/><rect x="15.500" y="38" width="17" height="17" rx="4" fill="#c9332a"/><rect x="37.500" y="38" width="17" height="17" rx="4" fill="#9fa9ad"/><rect x="59.500" y="38" width="17" height="17" rx="4" fill="#ea4c60"/><rect x="15.500" y="60" width="17" height="17" rx="4" fill="#8c42c4"/><rect x="37.500" y="60" width="17" height="17" rx="4" fill="#3c8df2"/><rect x="59.500" y="60" width="17" height="17" rx="4" fill="#67cda5"/></svg></div>
  <div><svg><use href="#safari"/></svg><i class="absolute left-[41px] top-[111px] size-2 rounded-full bg-black"></i></div>
  <div><svg viewBox="0 0 92 92"><clipPath id="mc"><rect width="92" height="92" rx="20"/></clipPath><g clip-path="url(#mc)"><path fill="#76d56c" d="M0 0h92v92H0z"/><path d="M0 12L92 95V66L44 22 0 0z" fill="#f4f4f6"/><path d="M0 0h20v22L0 12z" fill="#8be27f"/><path d="M0 38l22 20v34H0z" fill="#de84c4"/><path d="M50 68l34 24H50z" fill="#f6c93f"/><circle cx="92" cy="0" r="30" fill="#8fe285" stroke="#fff" stroke-width="12"/><circle cx="92" cy="0" r="30" fill="none" stroke="#c3c5cd" stroke-width="9"/><path d="M20 0h30v92H20z" fill="#f4f4f6"/><path d="M25 0h20v50H25z" fill="#2f72ee"/><path d="M25 78h20v14H25z" fill="#d5d6da"/></g><circle cx="35" cy="57" r="23" fill="#fff"/><circle cx="35" cy="57" r="19.500" fill="#2e73f0"/><path d="M35 43l10 26-10-6-10 6z" fill="#fff"/></svg></div>
  <div><svg viewBox="0 0 92 92"><rect width="92" height="92" rx="20" fill="#fdfdfd"/><g opacity=".86"><rect x="34" y="6" width="24" height="37" rx="12" fill="#f29325"/><rect x="34" y="6" width="24" height="37" rx="12" fill="#f3dc22" transform="rotate(45 46 46)"/><rect x="34" y="6" width="24" height="37" rx="12" fill="#b3d238" fill-opacity=".9" transform="rotate(90 46 46)"/><rect x="34" y="6" width="24" height="37" rx="12" fill="#5fb969" fill-opacity=".85" transform="rotate(135 46 46)"/><rect x="34" y="6" width="24" height="37" rx="12" fill="#4da3df" fill-opacity=".8" transform="rotate(180 46 46)"/><rect x="34" y="6" width="24" height="37" rx="12" fill="#7c6cc0" fill-opacity=".8" transform="rotate(225 46 46)"/><rect x="34" y="6" width="24" height="37" rx="12" fill="#c0609f" fill-opacity=".8" transform="rotate(270 46 46)"/><rect x="34" y="6" width="24" height="37" rx="12" fill="#ea4d3c" fill-opacity=".85" transform="rotate(315 46 46)"/></g></svg></div>
  <div><svg viewBox="0 0 92 92"><rect width="92" height="92" rx="20" fill="#f7f6f4"/><path d="M20 0h52a20 20 0 0120 20v8.500H0V20A20 20 0 0120 0z" fill="#e35b4f"/><text x="46" y="22" text-anchor="middle" font-family="Inter" font-weight="600" font-size="18.500" fill="#fff">MAG</text><text x="46" y="78" text-anchor="middle" font-family="Inter" font-weight="300" font-size="55" textLength="63" lengthAdjust="spacingAndGlyphs" fill="#1c1c1e">26</text></svg></div>
  <div><svg viewBox="0 0 92 92"><defs><linearGradient id="ff" x1="0" y1="0" x2="0" y2="1"><stop offset="0" stop-color="#f4b436"/><stop offset="1" stop-color="#f05d5e"/></linearGradient></defs><rect width="92" height="92" rx="20" fill="#fff"/><circle cx="37" cy="55" r="26" fill="url(#ff)"/><rect x="30" y="12" width="50" height="49" rx="5" fill="#55c4ec" fill-opacity=".88"/><path d="M19 59c4-13 10-27 15-25 7 3-5 22 2 21 6-1 8-21 14-19 6 3-3 20 3 19s7-14 12-14c6 0 0 13 5 13s7-8 11-13" fill="none" stroke="#17395c" stroke-width="5" stroke-linecap="round"/></svg></div>
  <div><svg viewBox="0 0 92 92"><defs><linearGradient id="pg" x1="0" y1="0" x2="0" y2="1"><stop offset="0" stop-color="#f4b748"/><stop offset="1" stop-color="#ee8b38"/></linearGradient></defs><rect width="92" height="92" rx="20" fill="url(#pg)"/><path d="M34 76.500h44v3H15z" fill="#fbd49a"/><path d="M73 17q5 1 2 8L26 72 14.500 78 18 66 64 21q5-5 9-4z" fill="#fbfbfb"/><path d="M41 45l7 5M18 66l6 7" stroke="#999" stroke-width="1.500"/></svg></div>
  <div><svg><use href="#term"/></svg><svg class="absolute inset-0" viewBox="0 0 92 92"><path d="M17 18l10 5.500-10 5.500M31 34.500h13" fill="none" stroke="#fff" stroke-width="3"/></svg><i class="absolute left-[41px] top-[111px] size-2 rounded-full bg-[#220404]"></i></div>
  <div><svg viewBox="0 0 92 92"><rect width="92" height="92" rx="20" fill="url(#blueV)"/><rect x="5.500" y="5.500" width="81" height="81" rx="15" fill="none" stroke="#d7ecfb" stroke-width="1.300"/><circle cx="46" cy="46" r="37" fill="none" stroke="#9fd0f5" stroke-opacity=".6"/><g fill="#fff" fill-opacity=".15" stroke="#d7ecfb" stroke-width="1.400"><rect x="13" y="52" width="65" height="8" rx="4"/><rect x="42" y="14" width="8" height="62" rx="4" transform="rotate(26 46 17)"/><rect x="42" y="14" width="8" height="62" rx="4" transform="rotate(-26 46 17)"/></g><path d="M60 37l9 3-26 54q-3 5-8 4-8-2-6-8z" fill="#23262b"/><path d="M70 12l10 5-12 23-8-3z" fill="#6d7074"/><path d="M51 0q5-8 18-7 12 1 19 12l5 1 3-3 7 4-4 12-7-2-1-4-7 1-5 4-11-5 3-8Q62-3 51 0z" fill="#3b3e43"/></svg></div>
  <div><svg viewBox="0 0 92 92"><defs><linearGradient id="dc" x1="0" y1="0" x2="0" y2="1"><stop offset="0" stop-color="#7a83f3"/><stop offset="1" stop-color="#5560ee"/></linearGradient></defs><rect width="92" height="92" rx="20" fill="url(#dc)"/><path d="M33 21l3 3.500q10-2 20 0L59 21q10 1 14 5 6 12 7 35-6 8-17 10l-4-7 5-2.500q-18 6-36 0L33 64l-4 7Q18 69 12 61q0-20 7-35 6-4 14-5z" fill="#fff"/><ellipse cx="35.500" cy="48.500" rx="6" ry="6.800" fill="#5b64dc"/><ellipse cx="57" cy="48.500" rx="6" ry="6.800" fill="#5b64dc"/></svg><i class="absolute left-[41px] top-[111px] size-2 rounded-full bg-[#220404]"></i></div>
  <div><svg viewBox="0 0 92 92"><rect width="92" height="92" rx="20" fill="url(#blueV)"/><path d="M42 21l24 43M50 21L29 57M17 56h31M61 56h14M25 65l-3 6M66 64l4 8" stroke="#fff" stroke-width="7.500" stroke-linecap="round"/></svg></div>
  <div><svg viewBox="0 0 92 92"><defs><linearGradient id="st" x1="0" y1="0" x2="0" y2="1"><stop offset="0" stop-color="#d7dee3"/><stop offset="1" stop-color="#8f8f8d"/></linearGradient></defs><rect width="92" height="92" rx="20" fill="url(#st)"/><circle cx="46" cy="46" r="40" fill="#2c2d2f"/><circle cx="46" cy="46" r="35.500" fill="none" stroke="#b9bdc0" stroke-width="4" stroke-dasharray="1.700 1.250"/><circle cx="46" cy="46" r="31" fill="none" stroke="#b6babd" stroke-width="5"/><circle cx="46" cy="46" r="21" fill="#55575a" stroke="#8d9093" stroke-width="3" stroke-dasharray="1.500 1"/><circle cx="46" cy="46" r="12.500" fill="#77797c"/><path d="M46 46h29M46 46L31.500 21M46 46L31.500 71" stroke="#c3c7ca" stroke-width="4.500"/><circle cx="46" cy="46" r="2.500" fill="#333"/></svg><span class="absolute left-[64px] top-[-10px] size-[42px] rounded-full bg-[#ec4f43] text-white font-['Inter',sans-serif] text-[23px] leading-[42px] text-center shadow">3</span></div>
  <i class="ml-[13px] mt-[-2px] w-[2px] h-[108px] bg-[#5c2843] shrink-0"></i>
  <div class="ml-[39px]"><svg viewBox="0 0 92 92"><rect width="92" height="92" rx="20" fill="#fbf8f8"/><circle cx="46" cy="46" r="40" fill="#f5c243"/><path d="M11.400 26A40 40 0 0180.600 26H46L28.500 56z" fill="#dc4d3c"/><path d="M11.400 26L28.700 56 46 66 63.300 56 46 86A40 40 0 0111.400 26z" fill="#4ba555"/><path d="M80.600 26H46v20l17.300 10L46 86A40 40 0 0080.600 26z" fill="#f5c243"/><circle cx="46" cy="46" r="19.500" fill="#fff"/><circle cx="46" cy="46" r="15.500" fill="#3f7ae8"/></svg><i class="absolute left-[41px] top-[111px] size-2 rounded-full bg-[#220404]"></i></div>
  <div><svg viewBox="0 0 92 92"><svg x="49" y="-8" width="46" height="78" viewBox="0 0 46 78"><path d="M40 0q6 3 3 16-3 14-9 26-4 9-10 10l-5 2 7-1q-4 7-11 7-3 3-7 18H6l5-19q-1-5 2-9l1 3q0-16 6-31Q30 4 40 0z" fill="url(#feather)"/><path d="M38 8Q22 34 14 56" fill="none" stroke="#e88a7a" stroke-opacity=".6"/></svg><text x="1" y="61" font-family="Liberation Sans" font-size="12.500" textLength="49" fill="#cc353b">APACHE</text><text x="9" y="91" font-family="Open Sans" font-weight="700" font-size="34.500" textLength="92" lengthAdjust="spacingAndGlyphs" fill="#000">Meter</text><text x="-1" y="91" font-family="Open Sans" font-weight="700" font-size="34.500" fill="#d0302f">J</text><text x="97" y="68" font-size="4.500" fill="#555">TM</text></svg><i class="absolute left-[42px] top-[111px] size-2 rounded-full bg-[#220404]"></i></div>
  <div><svg><use href="#term"/></svg><svg class="absolute inset-0" viewBox="0 0 92 92"><clipPath id="tc"><rect x="9" y="10.500" width="72" height="71" rx="6"/></clipPath><g clip-path="url(#tc)" font-family="DejaVu Sans Mono" font-size="18.500" fill="#f5cf47"><text x="14" y="40.500" textLength="70" lengthAdjust="spacingAndGlyphs">WARNIN</text><text x="7" y="65.500" textLength="73" lengthAdjust="spacingAndGlyphs">AY 7:36</text></g></svg></div>
  <div><svg viewBox="0 0 92 92"><defs><linearGradient id="pv" x1="0" y1="0" x2="0" y2="1"><stop offset="0" stop-color="#7aa0e4"/><stop offset="1" stop-color="#b7cdf2"/></linearGradient></defs><rect width="92" height="92" rx="20" fill="#f3f2f3"/><rect x="7" y="7" width="77" height="78" rx="10" fill="url(#pv)"/><path d="M7 49h77v12H7z" fill="#1f3566"/><path d="M7 60h77v15a10 10 0 01-10 10H17A10 10 0 017 75z" fill="#8fa4b8"/><path d="M7 66q12-4 20 2t20-3v8q-12 5-20 0T7 74z" fill="#f2f5f7"/><path d="M10 80l14-4 12 6-4 3H17z" fill="#7a6a4c"/><path d="M50 62h35q3 16 10 30-4 5-27 5t-28-5q8-15 10-30z" fill="#cfd1d4" fill-opacity=".95"/><path d="M45 87q22-8 45 0l2 5q-24 6-49 0z" fill="#f6f6f6"/><path d="M58 70l8-3 4 8-7 5zM70 68l6 2-2 6z" fill="#8b93a0"/><path d="M47 49q0-4 20-4t20 4v12q-2 4-20 4t-20-4z" fill="#1a1a1b"/><ellipse cx="67" cy="48.500" rx="17" ry="2.800" fill="#4a4a4c"/></svg></div>
  <i class="ml-[12px] mt-[-2px] w-[2px] h-[108px] bg-[#6a2c50] shrink-0"></i>
  <div class="ml-[40px]"><svg viewBox="0 0 92 92"><path d="M22-9h32l19 30v20H17V0h5z" fill="#f1f1f2"/><path d="M54-9l20 29v14H54z" fill="#d9d9dc"/><path d="M24-4h7v4h-7zM46-5h4v4h-4z" fill="#7d6a6a"/><path d="M0 18q0-6 6-6h20q3 0 6 3l6 5h50q6 0 6 6v14H0z" fill="#3f97cf"/><path d="M0 31q0-6 6-6h82q6 0 6 6v54q0 7-7 7H7q-7 0-7-7z" fill="#85cbf7"/><path d="M0 83h94M0 87h94" stroke="#6db6e6" stroke-width="1.500"/></svg></div>
  <svg class="ml-[-10px] mt-[-11px] w-[102px] h-[114px] shrink-0"><use href="#plume"/></svg>
  <div class="ml-[19px] mt-[8px] !w-[115px] !h-[76px] !mr-[10px]"><svg viewBox="0 0 115 76"><rect width="115" height="76" rx="6" fill="#dbeaf0"/><rect x="2" y="2" width="111" height="72" rx="4" fill="#060606"/><rect x="7" y="6" width="101" height="64" fill="#fff"/><g stroke="#8a8a8a" stroke-width="1.200" stroke-dasharray="7 1.500 4 1 9 2"><path d="M8 8.500h70M10 11.500h60M8 14.500h24M8 17.500h16M8 20.500h50M8 23.500h62M8 26.500h55M8 29.500h98M8 32.500h100M8 35.500h42M8 39h50M8 46h100M8 51h38M8 54h88M8 57h60M8 60h92M8 63h78"/></g><path d="M8 42.500h100" stroke="#999"/></svg><span class="absolute left-[44px] top-[74px] h-[21px] w-[70px] rounded-b-[11px] rounded-t-[5px] bg-[#6b2f33]/75 text-white text-[21px] leading-[19px] text-center whitespace-nowrap [text-shadow:0_1px_2px_#000]">java ...</span></div>
  <div class="mt-[11px] !w-[108px] !h-[70px] !mr-[30px]"><svg viewBox="0 0 108 70"><path fill="#fdfdfd" d="M0 0h108v70H0z"/><path fill="#f2e4e4" d="M0 0h108v7H0z"/><path fill="#3f281b" d="M0 7h108v13H0z"/><path fill="#19203a" d="M0 7h42v6H0zM72 7h36v6H72z"/><path fill="#fff" d="M44 8.500h27v2.500H44z"/><path fill="#c27a3c" d="M22 13h14v7H22zM56 13h20v7H56z" opacity=".6"/><circle cx="8" cy="22.500" r="1.800" fill="#444"/><circle cx="12.500" cy="22.500" r="1.800" fill="#d55"/><circle cx="17" cy="22.500" r="1.800" fill="#5a6"/><path d="M22 22h80M22 24.500h80" stroke="#bbb" stroke-dasharray="5 2.500"/><path fill="#37346e" d="M7 28h46v33H7z"/><path fill="#8580bf" d="M14 31h32v12H14z"/><path fill="#c9c4e6" d="M20 40h22v5H20z"/><path fill="#2a2b50" d="M7 53h46v8H7z"/><path fill="#6b5560" d="M55 28h22v12H55zM55 48h22v12H55z"/><path fill="#4a3a38" d="M79 28h23v12H79zM79 48h23v10H79z"/><path fill="#d9b08c" d="M88 30h6v8h-6zM63 30h5v9h-5z"/></svg><svg class="absolute left-[70px] top-[52px] !size-[36px]"><use href="#safari"/></svg></div>
  <div><svg viewBox="0 0 92 92"><defs><linearGradient id="tr"><stop offset="0" stop-color="#c9c6c7"/><stop offset=".3" stop-color="#efeeee"/><stop offset=".8" stop-color="#e3e2e2"/><stop offset="1" stop-color="#c4bfc0"/></linearGradient></defs><path d="M1 6q0-9 40-9t40 9l-10 86q-1 5-30 5t-30-5z" fill="url(#tr)"/><ellipse cx="41" cy="6" rx="40" ry="9" fill="#b9aeae" stroke="#ece9e9" stroke-width="1.500"/><path d="M6 4l12-9 8-4 8 4 8-2 6-6 8 5 10 3 9 5-4 8-12 6-20 2-20-3z" fill="#ecebeb"/><path d="M12 0l8-6 6 8-8 4zM45-2l8-8 6 8-8 6zM62 3l9-3 3 6-10 3zM30 6l6-3 5 6-8 5z" fill="#5d5d63"/><path d="M26 3l6-3 5 4-6 3z" fill="#36b2e0"/><path d="M46-8l4 3-3 5-3-4z" fill="#e88b3c"/><path d="M38 9l5-2-2 7z" fill="#3fb15a"/><path d="M12 26q14 8 20-4 8 10 20 3 12 7 22-5M14 55q20 6 50-4M20 80q20-8 44 2" fill="none" stroke="#fff" stroke-opacity=".6" stroke-width="5"/></svg></div>
</div>
</body>
</html>
